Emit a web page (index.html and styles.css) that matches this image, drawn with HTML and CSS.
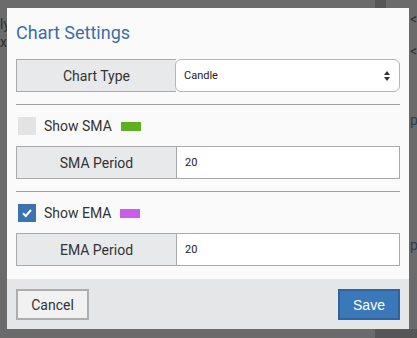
FILE: index.html
```html
<!DOCTYPE html>
<html lang="en">
<head>
  <meta charset="UTF-8">
  <title>Chart Settings</title>
  <link rel="stylesheet" href="styles.css">
</head>
<body>
  <div class="backdrop">
    <span class="bg-strip top"></span>
    <span class="bg-strip bottom"></span>
    <span class="bg-text left1">ly</span>
    <span class="bg-text left2">xe</span>
    <span class="bg-text right1">&lt;</span>
    <span class="bg-text right2">&lt;</span>
    <span class="bg-text right3">p</span>
    <span class="bg-text right4">p</span>
  </div>

  <div class="modal">
    <h2 class="modal-title">Chart Settings</h2>

    <div class="modal-body">
      <div class="field">
        <span class="field-label">Chart Type</span>
        <div class="field-select">
          <span>Candle</span>
          <svg width="8" height="12" viewBox="0 0 8 12">
            <path d="M4 1 L7 5 H1 Z" fill="#333"/>
            <path d="M4 11 L7 7 H1 Z" fill="#333"/>
          </svg>
        </div>
      </div>

      <hr class="divider">

      <label class="toggle">
        <span class="check"></span>
        Show SMA
        <span class="swatch sma"></span>
      </label>
      <div class="field">
        <span class="field-label">SMA Period</span>
        <span class="field-input">20</span>
      </div>

      <hr class="divider">

      <label class="toggle">
        <span class="check checked">
          <svg width="12" height="10" viewBox="0 0 12 10">
            <path d="M2 5.2 L4.8 8 L10 2" fill="none" stroke="#fff" stroke-width="2"/>
          </svg>
        </span>
        Show EMA
        <span class="swatch ema"></span>
      </label>
      <div class="field">
        <span class="field-label">EMA Period</span>
        <span class="field-input">20</span>
      </div>
    </div>

    <div class="modal-footer">
      <button class="btn btn-cancel">Cancel</button>
      <button class="btn btn-save">Save</button>
    </div>
  </div>
</body>
</html>
```

FILE: styles.css
```css
* {
  box-sizing: border-box;
  margin: 0;
  padding: 0;
}

body {
  background: #6b6b6b;
  font-family: Roboto, 'Liberation Sans', sans-serif;
  color: #333;
  width: 417px;
  height: 338px;
  overflow: hidden;
  position: relative;
}

.backdrop {
  position: absolute;
  inset: 0;
}

.bg-strip {
  position: absolute;
  background: #565656;
}

.bg-strip.top {
  left: 375px;
  top: 0;
  width: 11px;
  height: 8px;
}

.bg-strip.bottom {
  left: 375px;
  top: 329px;
  width: 42px;
  height: 9px;
}

.bg-text {
  position: absolute;
  font-size: 14px;
  color: #2e2e2e;
}

.bg-text.left1 { left: 0; top: 16px; }
.bg-text.left2 { left: 0; top: 34px; }
.bg-text.right1 { left: 410px; top: 11px; }
.bg-text.right2 { left: 410px; top: 43px; }
.bg-text.right3 { left: 410px; top: 112px; color: #2a3e55; }
.bg-text.right4 { left: 410px; top: 237px; color: #2a3e55; }

.modal {
  position: relative;
  margin: 8px 0 0 7px;
  width: 402px;
  height: 321px;
  background: #fafafa;
  display: flex;
  flex-direction: column;
}

.modal-title {
  font-size: 18px;
  font-weight: 400;
  line-height: 22px;
  color: #3a6ea8;
  padding: 14px 9px 15px;
}

.modal-body {
  padding: 0 9px;
  flex: 1;
  display: flex;
  flex-direction: column;
}

.field {
  display: flex;
  height: 33px;
}

.field-label {
  width: 160px;
  background: #e8e9ea;
  border: 1px solid #a9a9a9;
  border-right: none;
  display: flex;
  align-items: center;
  justify-content: center;
  font-size: 14px;
}

.field-input,
.field-select {
  flex: 1;
  background: #fff;
  border: 1px solid #a9a9a9;
  display: flex;
  align-items: center;
  padding: 0 8px;
  font-size: 11px;
  color: #222;
}

.field-select {
  justify-content: space-between;
  border-color: #b5b5b5;
  border-radius: 6px;
  margin-left: -1px;
}

.divider {
  border: none;
  border-top: 1px solid #a0a0a0;
  margin: 12px 0;
}

.toggle {
  display: flex;
  align-items: center;
  gap: 8px;
  height: 18px;
  margin: 0 0 11px 2px;
  font-size: 14px;
}

.check {
  width: 18px;
  height: 18px;
  background: #e3e3e3;
  display: flex;
  align-items: center;
  justify-content: center;
}

.check.checked {
  background: #3a72b3;
}

.swatch {
  width: 20px;
  height: 9px;
  margin-left: 1px;
}

.swatch.sma {
  background: #5cb21e;
}

.swatch.ema {
  background: #c95de8;
}

.modal-footer {
  background: #e5e6e7;
  height: 50px;
  padding: 10px 9px 9px;
  display: flex;
  justify-content: space-between;
}

.btn {
  font-size: 14px;
  height: 31px;
  cursor: pointer;
}

.btn-cancel {
  font-family: Roboto, 'Liberation Sans', sans-serif;
  width: 73px;
  background: #f1f1f1;
  border: 2px solid #adadad;
  color: #333;
}

.btn-save {
  font-family: 'Liberation Sans', Arial, sans-serif;
  width: 62px;
  background: #3a78b9;
  border: 2px solid #2e64a0;
  color: #fff;
}
```
